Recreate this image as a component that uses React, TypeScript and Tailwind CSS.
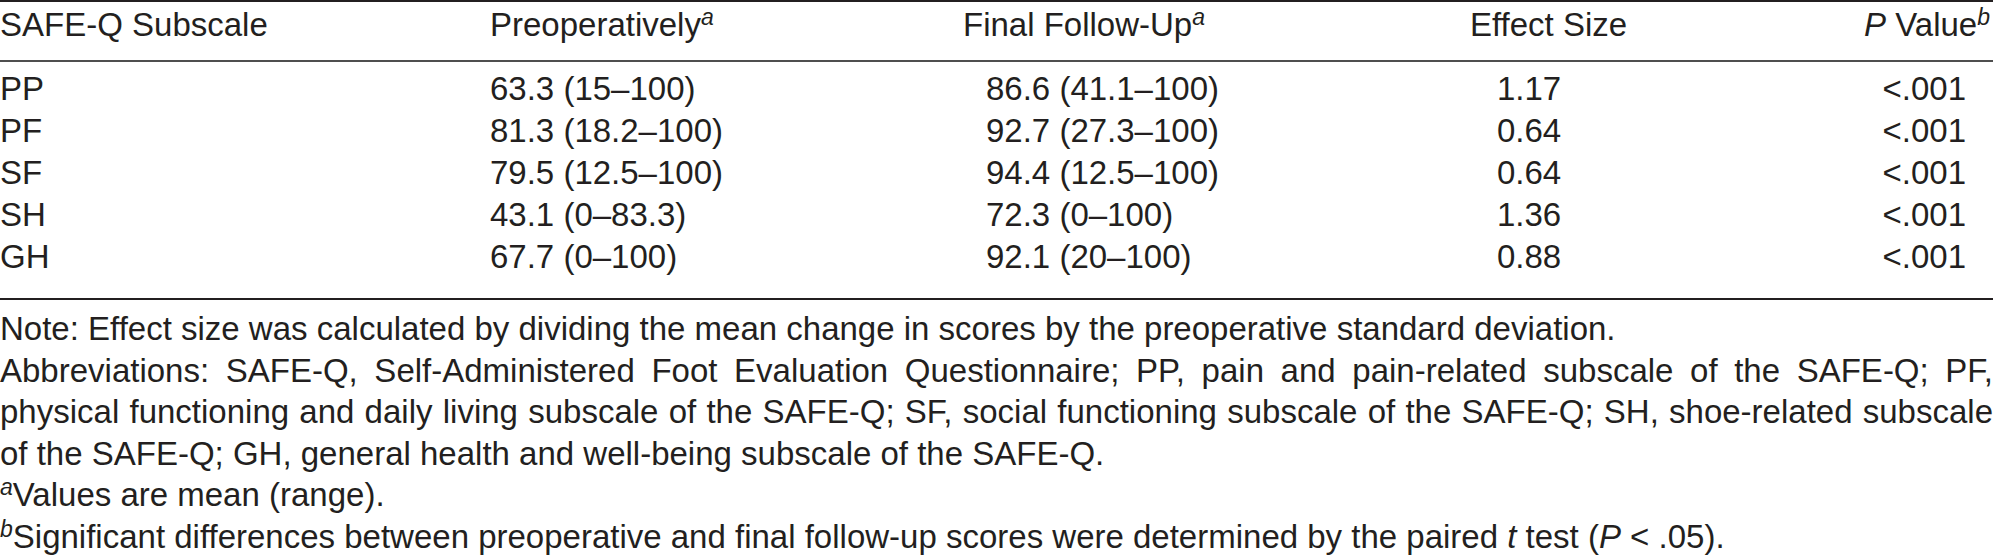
import React from 'react'

const rows = [
  { scale: 'PP', pre: '63.3 (15–100)', post: '86.6 (41.1–100)', effect: '1.17', p: '<.001' },
  { scale: 'PF', pre: '81.3 (18.2–100)', post: '92.7 (27.3–100)', effect: '0.64', p: '<.001' },
  { scale: 'SF', pre: '79.5 (12.5–100)', post: '94.4 (12.5–100)', effect: '0.64', p: '<.001' },
  { scale: 'SH', pre: '43.1 (0–83.3)', post: '72.3 (0–100)', effect: '1.36', p: '<.001' },
  { scale: 'GH', pre: '67.7 (0–100)', post: '92.1 (20–100)', effect: '0.88', p: '<.001' },
]

function Sup({ children }: { children: React.ReactNode }) {
  return <sup className="relative top-[-11px] text-[23px] italic leading-none align-baseline">{children}</sup>
}

export default function App() {
  return (
    <div
      className="w-[1993px] h-[558px] overflow-hidden bg-white text-[33px] text-[#231f20]"
      style={{ fontFamily: '"Liberation Sans", Arial, sans-serif' }}
    >
      <div className="h-[2px] bg-[#231f20]" />

      {/* header */}
      <div className="grid grid-cols-[490px_473px_507px_1fr_240px] pt-[2px] pb-[14px] leading-[42px] border-b-2 border-[#4f4f4f]">
        <div>SAFE-Q Subscale</div>
        <div>
          Preoperatively<Sup>a</Sup>
        </div>
        <div>
          Final Follow-Up<Sup>a</Sup>
        </div>
        <div>Effect Size</div>
        <div className="text-right pr-[3px]">
          <span className="italic">P</span> Value<Sup>b</Sup>
        </div>
      </div>

      {/* body */}
      <div className="pt-[6px] pb-[20px] leading-[42px] border-b-2 border-[#231f20]">
        {rows.map((r) => (
          <div key={r.scale} className="grid grid-cols-[490px_473px_507px_1fr_240px]">
            <div>{r.scale}</div>
            <div>{r.pre}</div>
            <div className="pl-[23px]">{r.post}</div>
            <div className="pl-[27px]">{r.effect}</div>
            <div className="text-right pr-[27px]">{r.p}</div>
          </div>
        ))}
      </div>

      {/* notes */}
      <div className="pt-[8px] leading-[41.5px]">
        <p>Note: Effect size was calculated by dividing the mean change in scores by the preoperative standard deviation.</p>
        <p className="text-justify">
          Abbreviations: SAFE-Q, Self-Administered Foot Evaluation Questionnaire; PP, pain and pain-related subscale of the
          SAFE-Q; PF, physical functioning and daily living subscale of the SAFE-Q; SF, social functioning subscale of the
          SAFE-Q; SH, shoe-related subscale of the SAFE-Q; GH, general health and well-being subscale of the SAFE-Q.
        </p>
        <p>
          <Sup>a</Sup>Values are mean (range).
        </p>
        <p>
          <Sup>b</Sup>Significant differences between preoperative and final follow-up scores were determined by the paired{' '}
          <span className="italic">t</span> test (<span className="italic">P</span> &lt; .05).
        </p>
      </div>
    </div>
  )
}
